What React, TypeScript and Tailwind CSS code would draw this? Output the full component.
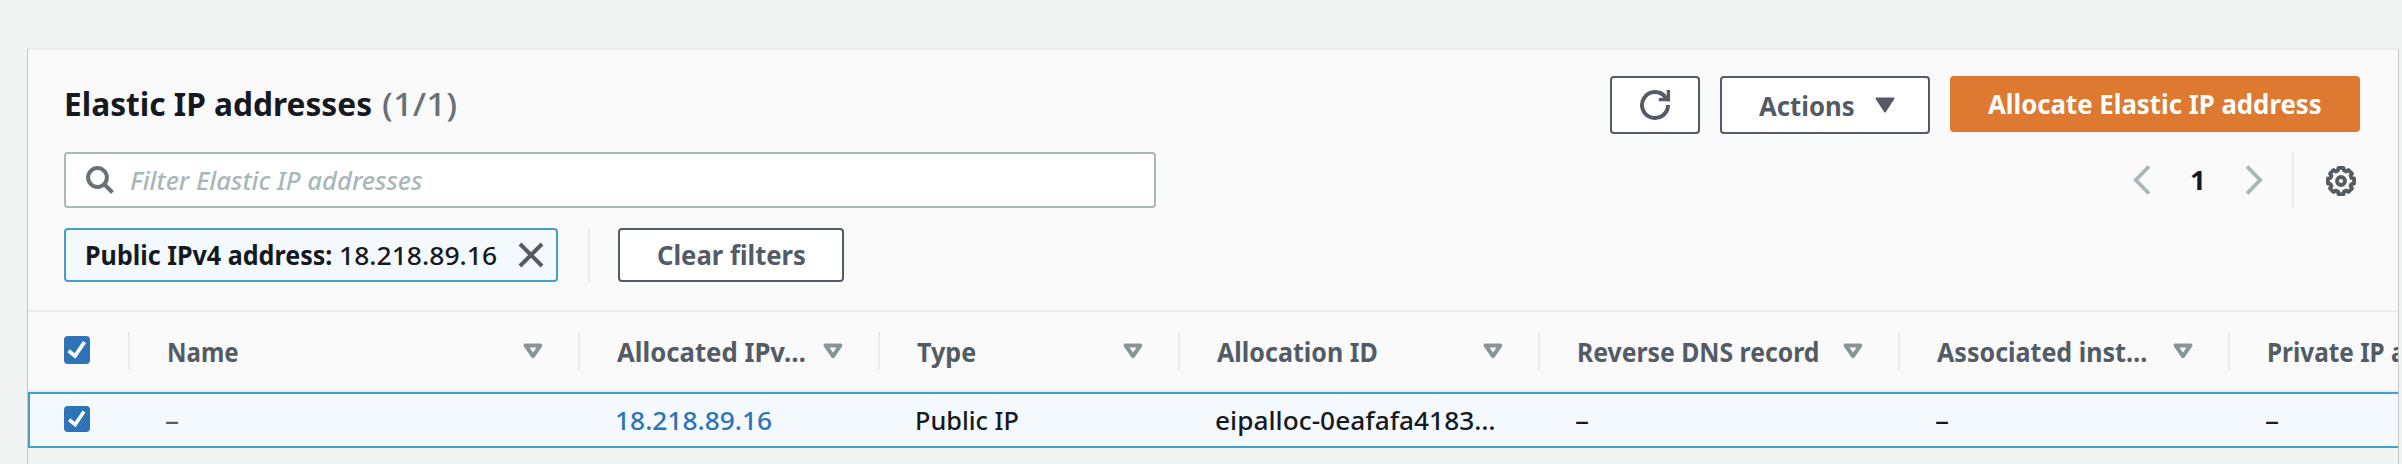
import { useLayoutEffect, useRef, useState } from "react";

const FONT = "font-['Noto_Sans','Open_Sans',sans-serif]";

/** A single line of text whose glyphs are condensed to a given width. */
function Fit({ w, className = "", children }: { w: number; className?: string; children: string }) {
  const ref = useRef<HTMLSpanElement>(null);
  const [s, setS] = useState(1);
  useLayoutEffect(() => {
    if (ref.current) setS(w / ref.current.offsetWidth);
  }, [w]);
  return (
    <span className={`block shrink-0 whitespace-nowrap ${className}`} style={{ width: w }}>
      <span ref={ref} className="inline-block origin-left" style={{ transform: `scaleX(${s})` }}>
        {children}
      </span>
    </span>
  );
}

function Check({ className = "" }: { className?: string }) {
  return (
    <span className={`block w-[26px] rounded-[4px] bg-[#2e73b8] ${className}`}>
      <svg viewBox="0 0 26 28" className="h-full w-full" fill="none" stroke="#fff" strokeWidth="3.8">
        <path d="M4.6 14.8l6.4 5.2L20.5 6" />
      </svg>
    </span>
  );
}

function SortIcon() {
  return (
    <svg viewBox="0 0 20 16" className="h-4 w-5" fill="none" stroke="#879596" strokeWidth="4" strokeLinejoin="round">
      <path d="M2.6 2.4h14.8L10 13.2z" />
    </svg>
  );
}

/** Outline of an eight-toothed gear centred in a 32×32 box. */
const gearPoints = Array.from({ length: 8 }, (_, i) => i * 45)
  .flatMap((a) => [
    [a - 16, 10.9],
    [a - 11, 13.3],
    [a + 11, 13.3],
    [a + 16, 10.9],
  ])
  .map(([a, r]) => {
    const t = (a * Math.PI) / 180;
    return `${(16 + r * Math.cos(t)).toFixed(2)},${(16 + r * Math.sin(t)).toFixed(2)}`;
  })
  .join(" ");

const columns = [
  { label: "Name", tw: 72, value: "–", vw: 14, col: "w-[450px]", tone: "text-[#545b64]" },
  { label: "Allocated IPv…", tw: 189, value: "18.218.89.16", vw: 157, col: "w-[300px]", tone: "text-[#2e73b8]" },
  { label: "Type", tw: 59, value: "Public IP", vw: 104, col: "w-[300px]", tone: "text-[#16191f]" },
  { label: "Allocation ID", tw: 161, value: "eipalloc-0eafafa4183…", vw: 281, col: "w-[360px]", tone: "text-[#16191f]" },
  { label: "Reverse DNS record", tw: 242, value: "–", vw: 14, col: "w-[360px]", tone: "text-[#16191f]" },
  { label: "Associated inst…", tw: 210, value: "–", vw: 14, col: "w-[330px]", tone: "text-[#16191f]" },
  { label: "Private IP address", tw: 219, value: "–", vw: 14, col: "w-[360px]", tone: "text-[#16191f]" },
];

export default function App() {
  return (
    <div className={`flex h-[464px] w-[2402px] overflow-hidden bg-[#f2f3f3] pl-[27px] pt-12 text-[26px] leading-[36px] ${FONT}`}>
      <div className="flex h-[416px] w-[2372px] flex-col overflow-hidden border-x border-t-2 border-x-[#c3c6c6] border-t-[#eaeded]">
        <div className="h-[260px] shrink-0 bg-[#fafafa] pl-9 pr-[38px]">
          <div className="flex h-[102px] items-start justify-between pt-[26px]">
            <h1 className="flex gap-2.5 pt-1.5 text-[33px] leading-[44px]">
              <Fit w={308} className="font-bold text-[#16191f]">Elastic IP addresses</Fit>
              <Fit w={75} className="font-medium text-[#687078]">(1/1)</Fit>
            </h1>
            <div className="flex gap-5">
              <button className="flex h-[58px] w-[90px] items-center justify-center rounded-[4px] border-2 border-[#545b64] bg-white">
                <svg viewBox="0 0 32 32" className="h-8 w-8" fill="none" stroke="#545b64" strokeWidth="4">
                  <path d="M29 16A13 13 0 1 1 26.6 8.5L28.4 10.6" />
                  <path d="M29.4 1v11.4M19.8 10.6H31" strokeWidth="3.4" />
                </svg>
              </button>
              <button className="flex h-[58px] w-[210px] items-center rounded-[4px] border-2 border-[#545b64] bg-white pl-[37px] pt-0.5 font-bold text-[#545b64]">
                <Fit w={96}>Actions</Fit>
                <svg viewBox="0 0 20 16" className="-mt-0.5 ml-5 h-4 w-5" fill="#545b64" stroke="#545b64" strokeWidth="2" strokeLinejoin="round">
                  <path d="M1.5 1.5h17L10 14.5z" />
                </svg>
              </button>
              <button className="flex h-14 w-[410px] items-center justify-center rounded-[4px] bg-[#dd7931] font-bold text-white">
                <Fit w={334}>Allocate Elastic IP address</Fit>
              </button>
            </div>
          </div>
          <div className="flex h-14 justify-between">
            <div className="flex w-[1092px] items-center rounded-[4px] border-2 border-[#aab7b8] bg-white pl-5">
              <svg viewBox="0 0 28 28" className="h-7 w-7" fill="none" stroke="#687078" strokeWidth="4">
                <circle cx="11.5" cy="11.5" r="9.4" />
                <path d="M18 18l8.5 8.5" />
              </svg>
              <Fit w={293} className="ml-4 font-medium italic text-[#aab7b8]">Filter Elastic IP addresses</Fit>
            </div>
            <div className="flex items-center">
              <svg viewBox="0 0 18 30" className="h-[30px] w-[18px]" fill="none" stroke="#aab7b8" strokeWidth="3.8">
                <path d="M16 1.5L2.8 15 16 28.5" />
              </svg>
              <Fit w={16} className="ml-[39px] mr-[39px] font-bold text-[#16191f]">1</Fit>
              <svg viewBox="0 0 18 30" className="h-[30px] w-[18px]" fill="none" stroke="#aab7b8" strokeWidth="3.8">
                <path d="M2 1.5L15.2 15 2 28.5" />
              </svg>
              <span className="ml-[29px] h-14 w-0.5 bg-[#eaeded]" />
              <svg viewBox="0 0 32 32" className="ml-[31px] mr-[3px] mt-0.5 h-8 w-8" fill="none" stroke="#545b64" strokeWidth="3.8">
                <polygon points={gearPoints} strokeLinejoin="round" />
                <circle cx="16" cy="16" r="4" />
              </svg>
            </div>
          </div>
          <div className="mt-5 flex h-[54px]">
            <div className="flex w-[494px] items-center rounded-[4px] border-2 border-[#44a0c8] bg-[#f3f9fd] pl-[19px] text-[#16191f]">
              <Fit w={247} className="font-bold">Public IPv4 address:</Fit>
              <Fit w={158} className="ml-[7px] font-medium">18.218.89.16</Fit>
              <svg viewBox="0 0 26 26" className="ml-[21px] h-[26px] w-[26px]" fill="none" stroke="#545b64" strokeWidth="4">
                <path d="M2 2l22 22M24 2L2 24" />
              </svg>
            </div>
            <span className="ml-[30px] w-0.5 bg-[#eaeded]" />
            <button className="ml-7 flex w-[226px] items-center justify-center rounded-[4px] border-2 border-[#545b64] bg-white font-bold text-[#545b64]">
              <Fit w={149}>Clear filters</Fit>
            </button>
          </div>
        </div>
        <div className="flex h-[82px] w-[2562px] shrink-0 border-y-2 border-[#eaeded] bg-[#fafafa] pt-5">
          <div className="flex h-[38px] w-[102px] border-r-2 border-[#eaeded] pl-9 pt-1">
            <Check className="h-7" />
          </div>
          {columns.map((c) => (
            <div key={c.label} className={`flex h-[38px] shrink-0 justify-between border-r-2 border-[#eaeded] pl-[37px] pr-[35px] font-bold text-[#545b64] ${c.col}`}>
              <Fit w={c.tw} className="pt-0.5">{c.label}</Fit>
              <span className="pt-[11px]"><SortIcon /></span>
            </div>
          ))}
        </div>
        <div className="flex h-14 w-[2562px] shrink-0 items-center border-2 border-[#44a0c8] bg-[#f3f9fd]">
          <div className="w-[100px] pl-[34px]">
            <Check className="-mt-0.5 h-[26px]" />
          </div>
          {columns.map((c) => (
            <div key={c.label} className={`shrink-0 pl-[37px] font-medium ${c.col} ${c.tone}`}>
              <Fit w={c.vw}>{c.value}</Fit>
            </div>
          ))}
        </div>
      </div>
    </div>
  );
}
